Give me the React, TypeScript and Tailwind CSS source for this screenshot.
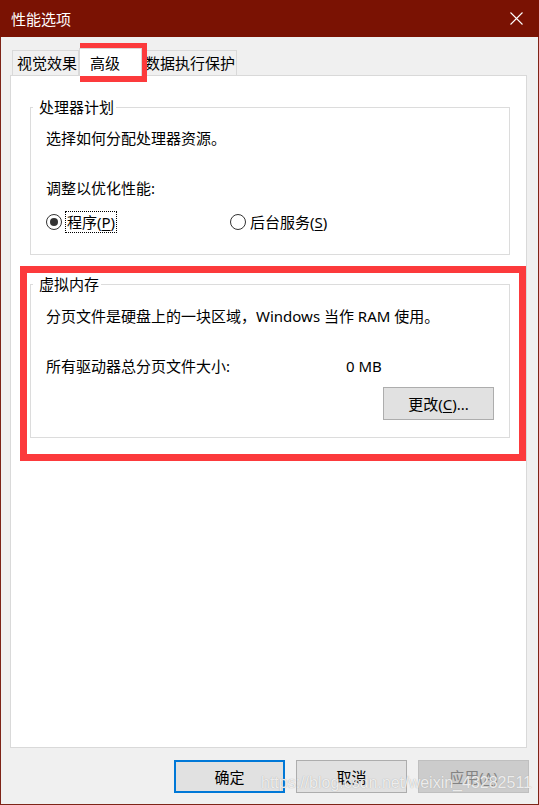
const FONT = "font-['Noto_Sans','Noto_Sans_CJK_SC',sans-serif]"

function Tab({ label, active, className }: { label: string; active?: boolean; className: string }) {
  return (
    <div
      className={`flex items-center border border-b-0 border-[#d9d9d9] text-[15px] leading-[20px] text-black ${
        active ? 'relative z-10 -mb-px h-[28px] bg-white' : 'h-[25px] bg-[#f0f0f0]'
      } ${className}`}
    >
      {label}
    </div>
  )
}

function Radio({ checked }: { checked?: boolean }) {
  return (
    <span className="flex h-4 w-4 shrink-0 items-center justify-center rounded-full border border-[#333] bg-white">
      {checked && <span className="h-2 w-2 rounded-full bg-[#333]" />}
    </span>
  )
}

function Button({ children, variant = 'normal', className = '' }: { children: React.ReactNode; variant?: 'normal' | 'default' | 'disabled'; className?: string }) {
  const styles = {
    normal: 'border border-[#adadad] bg-[#e1e1e1] text-black',
    default: 'border-2 border-[#0078d7] bg-[#e1e1e1] text-black',
    disabled: 'border border-[#bfbfbf] bg-[#cccccc] text-[#838383]',
  }
  return (
    <div className={`flex h-[33px] w-[111px] items-center justify-center text-[15px] leading-[20px] ${styles[variant]} ${className}`}>
      {children}
    </div>
  )
}

function GroupBox({ title, className, children }: { title: string; className: string; children: React.ReactNode }) {
  return (
    <fieldset className={`mx-0 border border-[#dcdcdc] p-0 pl-[2px] ${className}`}>
      <legend className="pl-[6px] pr-[2px] text-[15px] leading-[20px] text-black">{title}</legend>
      {children}
    </fieldset>
  )
}

export default function App() {
  return (
    <div className={`relative flex h-[805px] w-[539px] flex-col overflow-hidden bg-[#f0f0f0] ${FONT}`}>
      {/* title bar */}
      <div className="flex h-[37px] shrink-0 items-center justify-between bg-[#7a1203] pl-[11px] pr-[16px] text-[15px] leading-[20px] text-white">
        <span>性能选项</span>
        <svg width="13" height="13" viewBox="0 0 13 13" stroke="white" strokeWidth="1.1" fill="none">
          <path d="M0.5 0.5 L12.5 12.5 M12.5 0.5 L0.5 12.5" />
        </svg>
      </div>

      <div className="flex flex-1 flex-col border-x border-b border-[#7e2417] pl-[9px] pr-[11px]">
        {/* tabs */}
        <div className="mt-[11px] flex h-[27px] items-end pl-[2px]">
          <Tab label="视觉效果" className="w-[67px] pl-[4px]" />
          <Tab label="高级" active className="w-[63px] pl-[10px]" />
          <Tab label="数据执行保护" className="w-[95px] pl-[2px]" />
        </div>

        {/* panel */}
        <div className="flex h-[673px] flex-col border border-[#d9d9d9] bg-white pl-[19px] pr-[16px]">
          <GroupBox title="处理器计划" className="mt-[21px]">
            <div className="pb-[21px] pl-[13px] text-[15px] leading-[20px] text-black">
              <p className="mt-[11px]">选择如何分配处理器资源。</p>
              <p className="mt-[30px]">调整以优化性能:</p>
              <div className="mt-[13px] flex h-[22px] items-center">
                <div className="flex w-[184px] items-center">
                  <Radio checked />
                  <span className="ml-[3px] flex h-[22px] items-center border border-dotted border-black px-[1px]">
                    程序(<u className="underline-offset-2">P</u>)
                  </span>
                </div>
                <div className="flex items-center">
                  <Radio />
                  <span className="ml-[4px]">
                    后台服务(<u className="underline-offset-2">S</u>)
                  </span>
                </div>
              </div>
            </div>
          </GroupBox>

          <GroupBox title="虚拟内存" className="mt-[19px]">
            <div className="pb-[17px] pl-[13px] pr-[15px] text-[15px] leading-[20px] text-black">
              <p className="mt-[12px]">分页文件是硬盘上的一块区域，Windows 当作 RAM 使用。</p>
              <div className="mt-[30px] flex">
                <span className="w-[300px]">所有驱动器总分页文件大小:</span>
                <span>0 MB</span>
              </div>
              <div className="mt-[11px] flex justify-end">
                <Button>
                  更改(<u className="underline-offset-2">C</u>)...
                </Button>
              </div>
            </div>
          </GroupBox>
        </div>

        {/* dialog buttons */}
        <div className="-mr-[2px] mt-[12px] flex justify-end gap-[11px]">
          <Button variant="default">确定</Button>
          <Button>取消</Button>
          <Button variant="disabled">
            应用(<u className="underline-offset-2">A</u>)
          </Button>
        </div>
      </div>

      {/* annotation boxes */}
      <div className="absolute left-[80px] top-[43px] h-[39px] w-[67px] border-[7px] border-[#fc3a3c]" />
      <div className="absolute left-[20px] top-[266px] h-[195px] w-[506px] border-[7px] border-[#fc3a3c]" />

      {/* watermark */}
      <div className="absolute left-[261px] top-[773px] whitespace-nowrap font-['Liberation_Sans',sans-serif] text-[16px] leading-[20px] text-white/80 [text-shadow:0_0_1px_#9a9a9a]">
        https://blog.csdn.net/weixin_43282511
      </div>
    </div>
  )
}
